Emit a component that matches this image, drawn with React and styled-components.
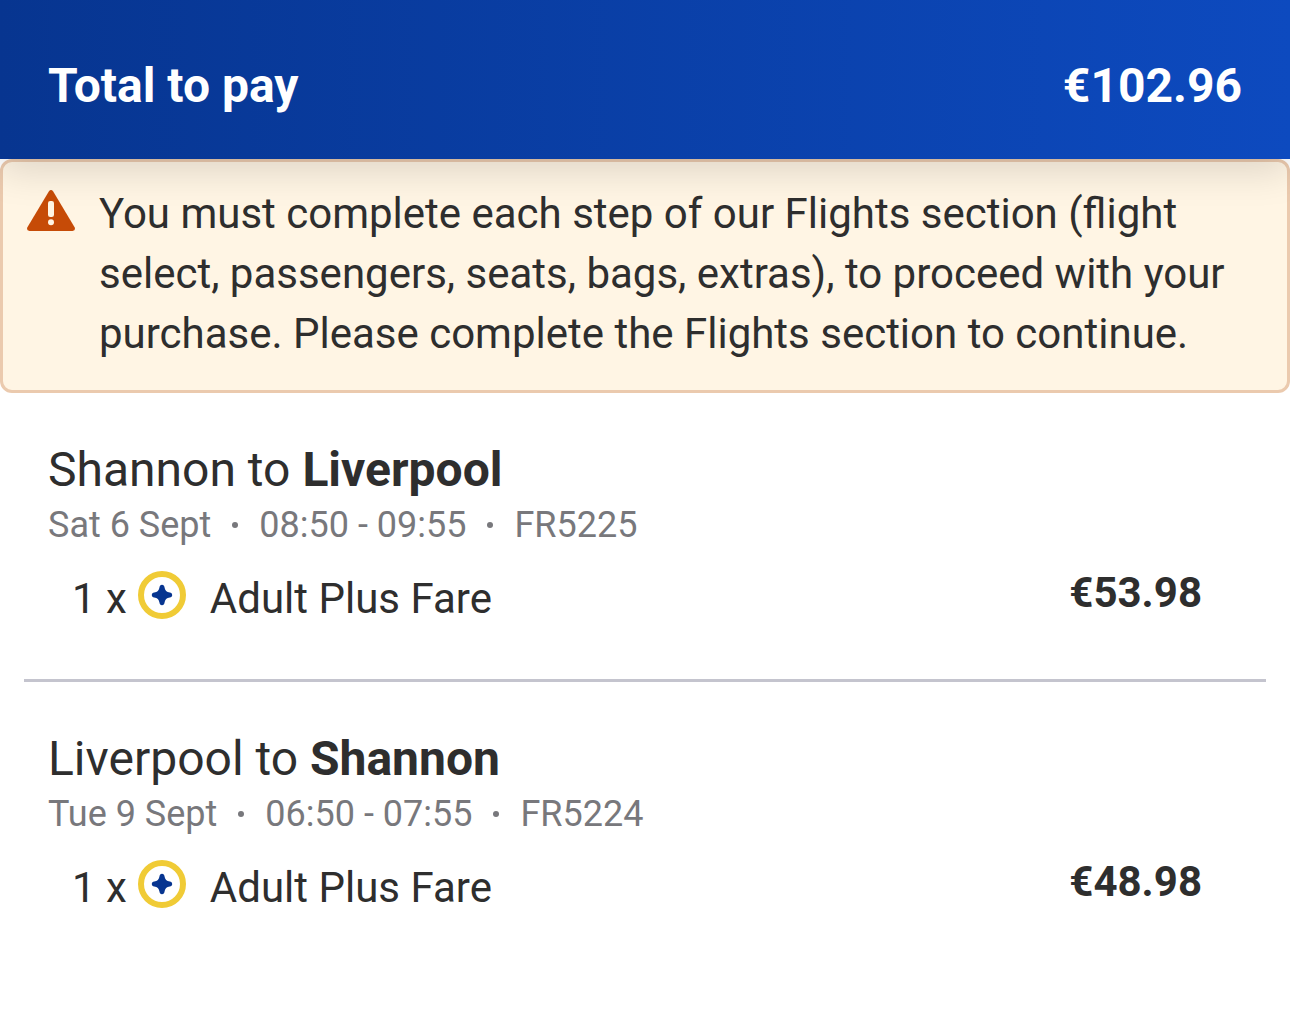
import React from 'react';
import styled, { createGlobalStyle } from 'styled-components';

const GlobalStyle = createGlobalStyle`
  *, *::before, *::after {
    box-sizing: border-box;
  }

  body {
    margin: 0;
    background: #ffffff;
    color: #2e2e2e;
    font-family: Roboto, sans-serif;
  }

  h1, h2, p {
    margin: 0;
    font-weight: 400;
  }
`;

const Header = styled.header`
  position: relative;
  display: flex;
  justify-content: space-between;
  align-items: center;
  padding: 50px 48px 37px;
  color: #ffffff;
  background: linear-gradient(90deg, #073590, #0d4abf);
  box-shadow: 0 12px 36px rgba(0, 0, 0, 0.13);
  font-size: 48px;
  line-height: 72px;

  h1, strong {
    font-size: 48px;
    font-weight: 700;
  }
`;

const Notice = styled.div`
  display: flex;
  gap: 24px;
  padding: 22px 24px 26px;
  border: 3px solid #ebcaae;
  border-radius: 12px;
  background: #fff5e4;

  svg {
    flex: none;
    margin-top: 6px;
  }

  p {
    font-size: 42px;
    line-height: 60px;
  }
`;

const Flight = styled.section`
  margin: 0 24px;
  padding: 47px 24px 50px;

  & + & {
    border-top: 3px solid #c4c4ce;
  }

  h2 {
    font-size: 48px;
    line-height: 60px;
  }
`;

const Details = styled.p`
  display: flex;
  align-items: center;
  font-size: 36px;
  line-height: 50px;
  color: #78787c;
`;

const Dot = styled.span`
  width: 6px;
  height: 6px;
  margin: 0 21px;
  border-radius: 50%;
  background: currentColor;
`;

const Fare = styled.div`
  display: flex;
  align-items: flex-start;
  margin-top: 19px;
  padding: 0 40px 0 24px;
  font-size: 42px;
  line-height: 60px;

  svg {
    flex: none;
    margin: 2px 24px 0 11px;
  }

  strong {
    margin-left: auto;
    font-weight: 700;
    line-height: 48px;
  }
`;

const flights = [
  { from: 'Shannon', to: 'Liverpool', date: 'Sat 6 Sept', time: '08:50 - 09:55', code: 'FR5225', price: '€53.98' },
  { from: 'Liverpool', to: 'Shannon', date: 'Tue 9 Sept', time: '06:50 - 07:55', code: 'FR5224', price: '€48.98' },
];

function WarningIcon() {
  return (
    <svg width="48" height="42" viewBox="0 0 48 42" aria-hidden="true">
      <path d="M21.8 1.4Q24-1.2 26.2 1.4L47.6 37.2Q49 40.5 45.5 41H2.5Q-1 40.5.4 37.2Z" fill="#c64b07" />
      <rect x="21" y="11" width="6" height="16" rx="2.2" fill="#fff5e4" />
      <circle cx="24" cy="32.3" r="3" fill="#fff5e4" />
    </svg>
  );
}

function PlusIcon() {
  return (
    <svg width="48" height="48" viewBox="0 0 48 48" aria-hidden="true">
      <circle cx="24" cy="24" r="21" fill="#ffffff" stroke="#f0cb36" strokeWidth="6" />
      <path
        d="M24 13.8C25.5 13.8 26.3 14.8 26.5 16.2C26.9 19.4 28.6 21.1 31.8 21.5C33.2 21.7 34.2 22.5 34.2 24S33.2 26.3 31.8 26.5C28.6 26.9 26.9 28.6 26.5 31.8C26.3 33.2 25.5 34.2 24 34.2S21.7 33.2 21.5 31.8C21.1 28.6 19.4 26.9 16.2 26.5C14.8 26.3 13.8 25.5 13.8 24S14.8 21.7 16.2 21.5C19.4 21.1 21.1 19.4 21.5 16.2C21.7 14.8 22.5 13.8 24 13.8Z"
        fill="#073590"
      />
    </svg>
  );
}

function App() {
  return (
    <>
      <GlobalStyle />
      <Header>
        <h1>Total to pay</h1>
        <strong>€102.96</strong>
      </Header>
      <main>
        <Notice>
          <WarningIcon />
          <p>
            You must complete each step of our Flights section (flight select, passengers, seats,
            bags, extras), to proceed with your purchase. Please complete the Flights section to
            continue.
          </p>
        </Notice>
        {flights.map((flight) => (
          <Flight key={flight.code}>
            <h2>{flight.from} to <b>{flight.to}</b></h2>
            <Details>
              <span>{flight.date}</span>
              <Dot />
              <span>{flight.time}</span>
              <Dot />
              <span>{flight.code}</span>
            </Details>
            <Fare>
              <span>1 x</span>
              <PlusIcon />
              <span>Adult Plus Fare</span>
              <strong>{flight.price}</strong>
            </Fare>
          </Flight>
        ))}
      </main>
    </>
  );
}

export default App;
